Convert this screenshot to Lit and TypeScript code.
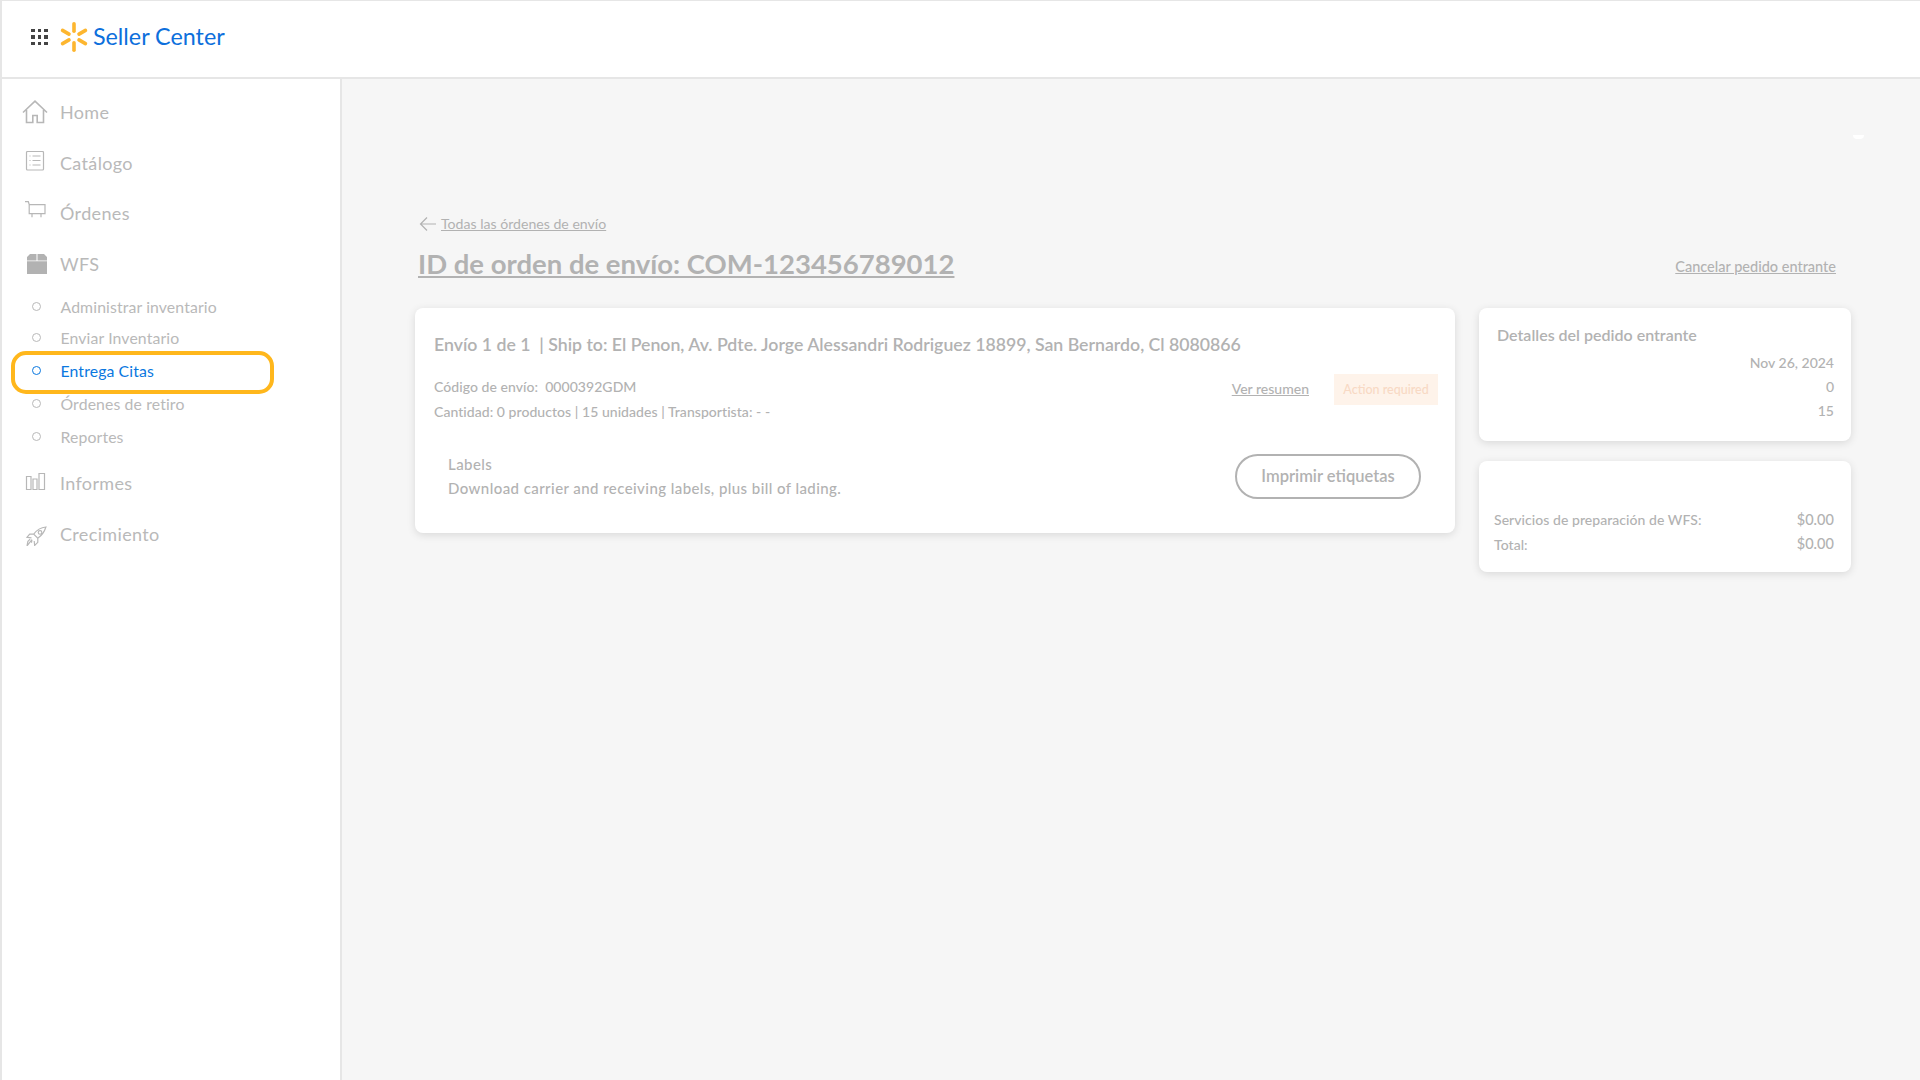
import { LitElement, html, css, svg } from "lit";
import { customElement } from "lit/decorators.js";

const icons = {
  home: svg`<svg class="ico" width="26" height="24" viewBox="0 0 26 24" fill="none" stroke="#b7b7b7" stroke-width="1.6"><path d="M1 12.5 13 1.2l12 11.3M4.5 10v12.5h6.3v-7h4.4v7h6.3V10"/></svg>`,
  cat: svg`<svg class="ico" width="26" height="24" viewBox="0 0 26 24" fill="none" stroke="#b7b7b7" stroke-width="1.2"><rect x="4.5" y=".5" width="17" height="18.500" rx="1"/><path d="M7.500 5h1M10.500 5h8M7.500 9.500h1M10.500 9.500h8M7.500 14h1M10.500 14h8"/></svg>`,
  cart: svg`<svg class="ico" width="26" height="24" viewBox="0 0 26 24" fill="none" stroke="#b7b7b7" stroke-width="1.2"><path d="M3 .7h3.300l1 3M7.200 3.700H23v9H7.200zM10 12.700v3.500M19 12.700v3.500"/></svg>`,
  box: svg`<svg class="ico" width="26" height="24" viewBox="0 0 26 24" fill="#b2b2b2"><path d="M8 2h6.500v6.500H5V5zM15.500 2H22l3 3v3.500H15.500zM5 9.300h20V22H5z"/></svg>`,
  bars: svg`<svg class="ico" width="26" height="24" viewBox="0 0 26 24" fill="none" stroke="#b7b7b7" stroke-width="1.2"><path d="M4.500 5.500H9v13H4.500zM11 8h4v10.500h-4zM17 2.500h5.500v16H17z"/></svg>`,
  rocket: svg`<svg class="ico" width="26" height="24" viewBox="0 0 26 24" fill="none" stroke="#b7b7b7" stroke-width="1.300"><g transform="translate(2.300 3.650) scale(.9)"><path d="M24 1.500c-6 .5-10 3-13.500 8l4.500 4.500c5-3.500 7.500-7.500 9-12.500zM10.500 9.500H6L3 13l5 .5M15 14v4.500L11.500 22 11 17M8.500 15.500 3 22.500l1-5 2.500-2.500M8.500 15.500 8 19"/><circle cx="17.500" cy="7.500" r="2"/></g></svg>`,
};

const spark = svg`<svg width="28" height="30" viewBox="0 0 28 30" fill="#fdb62f">
${[0, 60, 120, 180, 240, 300].map(
  (a) => svg`<rect x="12.200" y="0" width="3.600" height="11" rx="1.800" transform="rotate(${a} 14 15)"/>`
)}</svg>`;

@customElement("app-root")
export class AppRoot extends LitElement {
  static styles = css`
    :host { display: block; width: 1920px; height: 1080px; overflow: hidden; background: #fff;
      font-family: Lato, "Open Sans", sans-serif; color: #b2b2b2; }
    .top { height: 72px; box-sizing: content-box; border-top: 1px solid #e6e6e6; border-left: 2px solid #e6e6e6; border-bottom: 2px solid #e6e6e6;
      display: flex; align-items: center; padding: 0 0 4px 29px; background: #fff; }
    .dots { display: grid; grid-template-columns: repeat(3, 3.500px); gap: 3px; margin-right: 12.500px; }
    .dots i { width: 3.500px; height: 3.500px; background: #444; }
    .brand { font-size: 23.300px; color: #0d6fdc; margin: 0 0 2px 5px; font-weight: 400; }
    .body { display: flex; height: 1001px; }
    .side { width: 338px; flex: none; box-sizing: content-box; background: #fff; border-left: 2px solid #e6e6e6; border-right: 2px solid #e6e6e6;
      padding-top: 8px; color: #b9b9b9; }
    .item { display: flex; align-items: center; height: 50.500px; padding-left: 20px; font-size: 18px; gap: 12px; letter-spacing: .35px; }
    .sub { display: flex; align-items: center; height: 33px; padding-left: 30px; font-size: 15.800px; gap: 19.500px; position: relative; letter-spacing: .12px; }
    .subs { margin: 3px 0 5px; }
    .subs .sub:first-child { height: 29px; }
    .sub i { width: 7px; height: 7px; border: 1.500px solid #b9b9b9; border-radius: 50%; box-sizing: content-box; flex: none; }
    .sub.on { color: #0a78e0; }
    .sub.on i { border-color: #0a78e0; }
    .hl { position: absolute; left: 9px; top: -3px; width: 255px; height: 35px; border: 4px solid #ffb71c; border-radius: 15px; }
    .main { flex: 1; background: #f6f6f6; position: relative; padding: 134.500px 71px 0 73px; }
    .speck { position: absolute; left: 1511px; top: 56px; width: 11px; height: 4px; background: #fff; border-radius: 0 0 6px 6px; }
    .back { display: flex; align-items: center; gap: 4px; font-size: 14.100px; padding-left: 4px; height: 20px; }
    a { text-decoration: underline; color: inherit; }
    .head { display: flex; align-items: flex-start; justify-content: space-between; padding: 0 15px 0 3px; margin-top: 9.500px; height: 59px; }
    h1 { margin: 0; font-size: 27.500px; font-weight: 700; line-height: 42px; text-decoration: underline; }
    .cancel { font-size: 14.500px; font-weight: 500; line-height: 20px; margin-top: 14px; }
    .cols { display: flex; gap: 24px; align-items: flex-start; margin-top: 6px; }
    .card { background: #fff; border-radius: 8px; box-shadow: 0 2px 8px rgba(0,0,0,.12); box-sizing: border-box; }
    .left { width: 1040px; height: 225px; padding: 24px 17px 0 19px; }
    .ttl { font-size: 17.700px; font-weight: 600; line-height: 26px; }
    .meta { display: flex; justify-content: space-between; margin-top: 16px; }
    .m { font-size: 14px; font-weight: 500; line-height: 25px; letter-spacing: .05px; }
    .acts { display: flex; gap: 25px; align-items: center; height: 31px; }
    .acts a { font-size: 14px; font-weight: 500; margin-bottom: 2px; }
    .badge { background: #fef3ea; color: #f8d9c4; font-size: 12.500px; width: 104px; height: 31px; display: flex; align-items: center; justify-content: center; font-weight: 500; }
    .labels { display: flex; justify-content: space-between; align-items: center; margin-top: 28px; padding: 0 17px 0 14px; }
    .l { font-size: 15px; font-weight: 500; line-height: 24px; letter-spacing: .43px; }
    .btn { width: 186px; height: 45px; box-sizing: border-box; border: 2px solid #b2b2b2; border-radius: 23px; display: flex; align-items: center; justify-content: center; font-size: 16.500px; font-weight: 600; }
    .right { display: flex; flex-direction: column; gap: 20px; width: 372px; }
    .c1 { height: 133px; padding: 15px 17px 0 18px; }
    .c1 .h { font-size: 16px; font-weight: 600; line-height: 24px; margin-bottom: 4px; }
    .c1 .r { text-align: right; font-size: 14px; font-weight: 500; line-height: 24px; }
    .c2 { height: 111px; padding: 45.500px 17px 0 15px; font-size: 14px; font-weight: 500; line-height: 25px; letter-spacing: .05px; }
    .c2 div { display: flex; justify-content: space-between; }
    .c2 b { font-weight: 500; font-size: 14.500px; }
    .c2 div + div b { position: relative; top: -1px; }
  `;

  render() {
    return html`
      <div class="top">
        <div class="dots">${Array.from({ length: 9 }, () => html`<i></i>`)}</div>
        ${spark}
        <span class="brand">Seller Center</span>
      </div>
      <div class="body">
        <nav class="side">
          <div class="item">${icons.home}<span>Home</span></div>
          <div class="item">${icons.cat}<span>Catálogo</span></div>
          <div class="item">${icons.cart}<span>Órdenes</span></div>
          <div class="item">${icons.box}<span>WFS</span></div>
          <div class="subs">
            <div class="sub"><i></i>Administrar inventario</div>
            <div class="sub"><i></i>Enviar Inventario</div>
            <div class="sub on"><i></i>Entrega Citas<span class="hl"></span></div>
            <div class="sub"><i></i>Órdenes de retiro</div>
            <div class="sub"><i></i>Reportes</div>
          </div>
          <div class="item">${icons.bars}<span>Informes</span></div>
          <div class="item">${icons.rocket}<span>Crecimiento</span></div>
        </nav>
        <main class="main">
          <span class="speck"></span>
          <div class="back">
            <svg width="18" height="16" viewBox="0 0 18 16" fill="none" stroke="#b2b2b2" stroke-width="1.200"><path d="M17 8H1.500M8 1.500 1.500 8 8 14.500"/></svg>
            <a>Todas las órdenes de envío</a>
          </div>
          <div class="head">
            <h1>ID de orden de envío: COM-123456789012</h1>
            <a class="cancel">Cancelar pedido entrante</a>
          </div>
          <div class="cols">
            <section class="card left">
              <div class="ttl">Envío 1 de 1 &nbsp;| Ship to: El Penon, Av. Pdte. Jorge Alessandri Rodriguez 18899, San Bernardo, Cl 8080866</div>
              <div class="meta">
                <div class="m">Código de envío: &nbsp;0000392GDM<br />Cantidad: 0 productos | 15 unidades | Transportista: - -</div>
                <div class="acts"><a>Ver resumen</a><span class="badge">Action required</span></div>
              </div>
              <div class="labels">
                <div class="l">Labels<br />Download carrier and receiving labels, plus bill of lading.</div>
                <div class="btn">Imprimir etiquetas</div>
              </div>
            </section>
            <div class="right">
              <section class="card c1">
                <div class="h">Detalles del pedido entrante</div>
                <div class="r">Nov 26, 2024</div>
                <div class="r">0</div>
                <div class="r">15</div>
              </section>
              <section class="card c2">
                <div><span>Servicios de preparación de WFS:</span><b>$0.00</b></div>
                <div><span>Total:</span><b>$0.00</b></div>
              </section>
            </div>
          </div>
        </main>
      </div>
    `;
  }
}
